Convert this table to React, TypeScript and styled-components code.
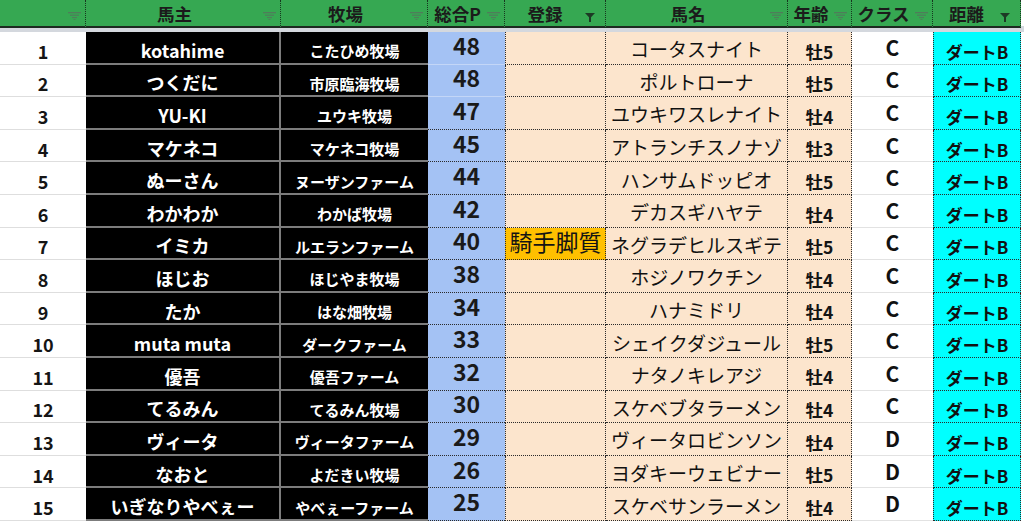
import React from 'react';
import styled, { createGlobalStyle } from 'styled-components';

const GlobalStyle = createGlobalStyle`
  html, body {
    margin: 0;
    padding: 0;
    background: #ffffff;
  }
  body {
    width: 1024px;
    height: 521px;
    overflow: hidden;
    font-family: 'Noto Sans CJK JP', 'Noto Sans', sans-serif;
  }
`;

const COLS = '86px 195px 147px 77px 101px 182px 64px 81px 88px 1fr';
const DOTTED = '1px dotted #2a2a2a';

const Sheet = styled.div`
  width: 1024px;
  height: 521px;
  overflow: hidden;
  display: flex;
  flex-direction: column;
`;

const HeaderRow = styled.div`
  display: grid;
  grid-template-columns: ${COLS};
  height: 28px;
  flex-shrink: 0;
`;

const HeaderCell = styled.div<{ $filler?: boolean }>`
  display: flex;
  align-items: center;
  box-sizing: border-box;
  background: ${(p) => (p.$filler ? '#ffffff' : '#36a852')};
  border-bottom: 2px solid ${(p) => (p.$filler ? '#d4d8de' : '#1d2a20')};
  border-right: ${(p) => (p.$filler ? 'none' : '1px dotted #17361f')};
  padding-right: 4px;
`;

const HeaderLabel = styled.span`
  flex: 1;
  text-align: center;
  font-size: 17.5px;
  font-weight: 700;
  line-height: 1;
  color: #1b1b1b;
  padding-top: 2px;
  white-space: nowrap;
`;

const FilterSlot = styled.span<{ $active?: boolean }>`
  width: ${(p) => (p.$active ? '16px' : '13px')};
  height: 9px;
  align-self: flex-end;
  margin-bottom: ${(p) => (p.$active ? '4px' : '5px')};
  display: flex;
  justify-content: flex-start;
  svg {
    display: block;
  }
`;

const Band = styled.div`
  height: 4px;
  background: #d4d8de;
  flex-shrink: 0;
`;

const Body = styled.div`
  display: flex;
  flex-direction: column;
`;

const Row = styled.div`
  display: grid;
  grid-template-columns: ${COLS};
  height: 32.6px;
  flex-shrink: 0;
`;

const Cell = styled.div`
  display: flex;
  align-items: center;
  justify-content: center;
  box-sizing: border-box;
  line-height: 1;
  white-space: nowrap;
  overflow: visible;
`;

const NumCell = styled(Cell)`
  background: #ffffff;
  border-bottom: 1px solid #dedede;
  font-size: 18px;
  font-weight: 700;
  color: #151515;
  padding-top: 6px;
`;

const OwnerCell = styled(Cell)`
  background: #000000;
  border-bottom: 2px solid #7c7c7c;
  border-right: 2px solid #7c7c7c;
  color: #ffffff;
  font-size: 18px;
  font-weight: 700;
  padding-top: 5px;
`;

const FarmCell = styled(Cell)`
  background: #000000;
  border-bottom: 2px solid #7c7c7c;
  color: #ffffff;
  font-size: 15px;
  font-weight: 700;
  padding-top: 7px;
`;

const PointsCell = styled(Cell)<{ $dotted: boolean }>`
  background: #a4c2f4;
  border-bottom: ${(p) => (p.$dotted ? DOTTED : '1px solid #c3d6f7')};
  color: #1a1a1a;
  font-size: 23px;
  font-weight: 700;
  padding-bottom: 5px;
`;

const EntryCell = styled(Cell)<{ $mark: boolean }>`
  background: ${(p) => (p.$mark ? '#ffc000' : '#fce5cd')};
  border-bottom: ${DOTTED};
  border-left: ${DOTTED};
  border-right: ${DOTTED};
  color: #141414;
  font-size: 23px;
  font-weight: 400;
  padding-bottom: 4px;
`;

const HorseCell = styled(Cell)`
  background: #fce5cd;
  border-bottom: ${DOTTED};
  border-right: ${DOTTED};
  color: #111111;
  font-size: 19px;
  font-weight: 400;
  padding-top: 2px;
`;

const AgeCell = styled(Cell)`
  background: #fce5cd;
  border-bottom: ${DOTTED};
  border-right: ${DOTTED};
  color: #141414;
  font-size: 17.5px;
  font-weight: 700;
  padding-top: 7px;
`;

const ClassCell = styled(Cell)`
  background: #ffffff;
  border-bottom: 1px solid #e2e2e2;
  color: #111111;
  font-size: 21px;
  font-weight: 700;
  padding-bottom: 1px;
`;

const DistCell = styled(Cell)`
  background: #00ffff;
  border-bottom: ${DOTTED};
  border-left: ${DOTTED};
  border-right: ${DOTTED};
  color: #111111;
  font-size: 17px;
  font-weight: 700;
  padding-top: 7px;
`;

const PadCell = styled.div`
  background: #ffffff;
`;

const FilterIcon = ({ active }: { active?: boolean }) =>
  active ? (
    <svg width="10" height="9" viewBox="0 0 10 9">
      <path d="M0 0H10L6 4.2V9H4V4.2Z" fill="#1d3a25" />
    </svg>
  ) : (
    <svg width="13" height="8" viewBox="0 0 13 8">
      <rect x="0" y="0" width="13" height="1.3" fill="#4f7d5a" />
      <rect x="2" y="2.6" width="9" height="1.2" fill="#4f7d5a" />
      <rect x="4" y="5" width="5" height="1.1" fill="#4f7d5a" />
      <rect x="5.6" y="7" width="1.8" height="1" fill="#4f7d5a" />
    </svg>
  );

const headers = [
  { label: '', active: false },
  { label: '馬主', active: false },
  { label: '牧場', active: false },
  { label: '総合P', active: false },
  { label: '登録', active: true },
  { label: '馬名', active: false },
  { label: '年齢', active: false },
  { label: 'クラス', active: false },
  { label: '距離', active: true },
];

type Entry = {
  owner: string;
  farm: string;
  points: number;
  entry: string;
  horse: string;
  age: string;
  cls: string;
};

const rows: Entry[] = [
  { owner: 'kotahime', farm: 'こたひめ牧場', points: 48, entry: '', horse: 'コータスナイト', age: '牡5', cls: 'C' },
  { owner: 'つくだに', farm: '市原臨海牧場', points: 48, entry: '', horse: 'ポルトローナ', age: '牡5', cls: 'C' },
  { owner: 'YU-KI', farm: 'ユウキ牧場', points: 47, entry: '', horse: 'ユウキワスレナイト', age: '牡4', cls: 'C' },
  { owner: 'マケネコ', farm: 'マケネコ牧場', points: 45, entry: '', horse: 'アトランチスノナゾ', age: '牡3', cls: 'C' },
  { owner: 'ぬーさん', farm: 'ヌーザンファーム', points: 44, entry: '', horse: 'ハンサムドッピオ', age: '牡5', cls: 'C' },
  { owner: 'わかわか', farm: 'わかば牧場', points: 42, entry: '', horse: 'デカスギハヤテ', age: '牡4', cls: 'C' },
  { owner: 'イミカ', farm: 'ルエランファーム', points: 40, entry: '騎手脚質', horse: 'ネグラデヒルスギテ', age: '牡5', cls: 'C' },
  { owner: 'ほじお', farm: 'ほじやま牧場', points: 38, entry: '', horse: 'ホジノワクチン', age: '牡4', cls: 'C' },
  { owner: 'たか', farm: 'はな畑牧場', points: 34, entry: '', horse: 'ハナミドリ', age: '牡4', cls: 'C' },
  { owner: 'muta muta', farm: 'ダークファーム', points: 33, entry: '', horse: 'シェイクダジュール', age: '牡5', cls: 'C' },
  { owner: '優吾', farm: '優吾ファーム', points: 32, entry: '', horse: 'ナタノキレアジ', age: '牡4', cls: 'C' },
  { owner: 'てるみん', farm: 'てるみん牧場', points: 30, entry: '', horse: 'スケベブタラーメン', age: '牡4', cls: 'C' },
  { owner: 'ヴィータ', farm: 'ヴィータファーム', points: 29, entry: '', horse: 'ヴィータロビンソン', age: '牡4', cls: 'D' },
  { owner: 'なおと', farm: 'よだきい牧場', points: 26, entry: '', horse: 'ヨダキーウェビナー', age: '牡5', cls: 'D' },
  { owner: 'いぎなりやべぇー', farm: 'やべぇーファーム', points: 25, entry: '', horse: 'スケベサンラーメン', age: '牡4', cls: 'D' },
];

export default function App() {
  return (
    <>
      <GlobalStyle />
      <Sheet>
        <HeaderRow>
          {headers.map((h, i) => (
            <HeaderCell key={`h-${i}`}>
              <HeaderLabel>{h.label}</HeaderLabel>
              <FilterSlot $active={h.active}>
                <FilterIcon active={h.active} />
              </FilterSlot>
            </HeaderCell>
          ))}
          <HeaderCell $filler />
        </HeaderRow>
        <Band />
        <Body>
          {rows.map((r, i) => (
            <Row key={`row-${i}`}>
              <NumCell>{i + 1}</NumCell>
              <OwnerCell>{r.owner}</OwnerCell>
              <FarmCell>{r.farm}</FarmCell>
              <PointsCell $dotted={i >= 2}>{r.points}</PointsCell>
              <EntryCell $mark={r.entry !== ''}>{r.entry}</EntryCell>
              <HorseCell>{r.horse}</HorseCell>
              <AgeCell>{r.age}</AgeCell>
              <ClassCell>{r.cls}</ClassCell>
              <DistCell>ダートB</DistCell>
              <PadCell />
            </Row>
          ))}
        </Body>
      </Sheet>
    </>
  );
}
